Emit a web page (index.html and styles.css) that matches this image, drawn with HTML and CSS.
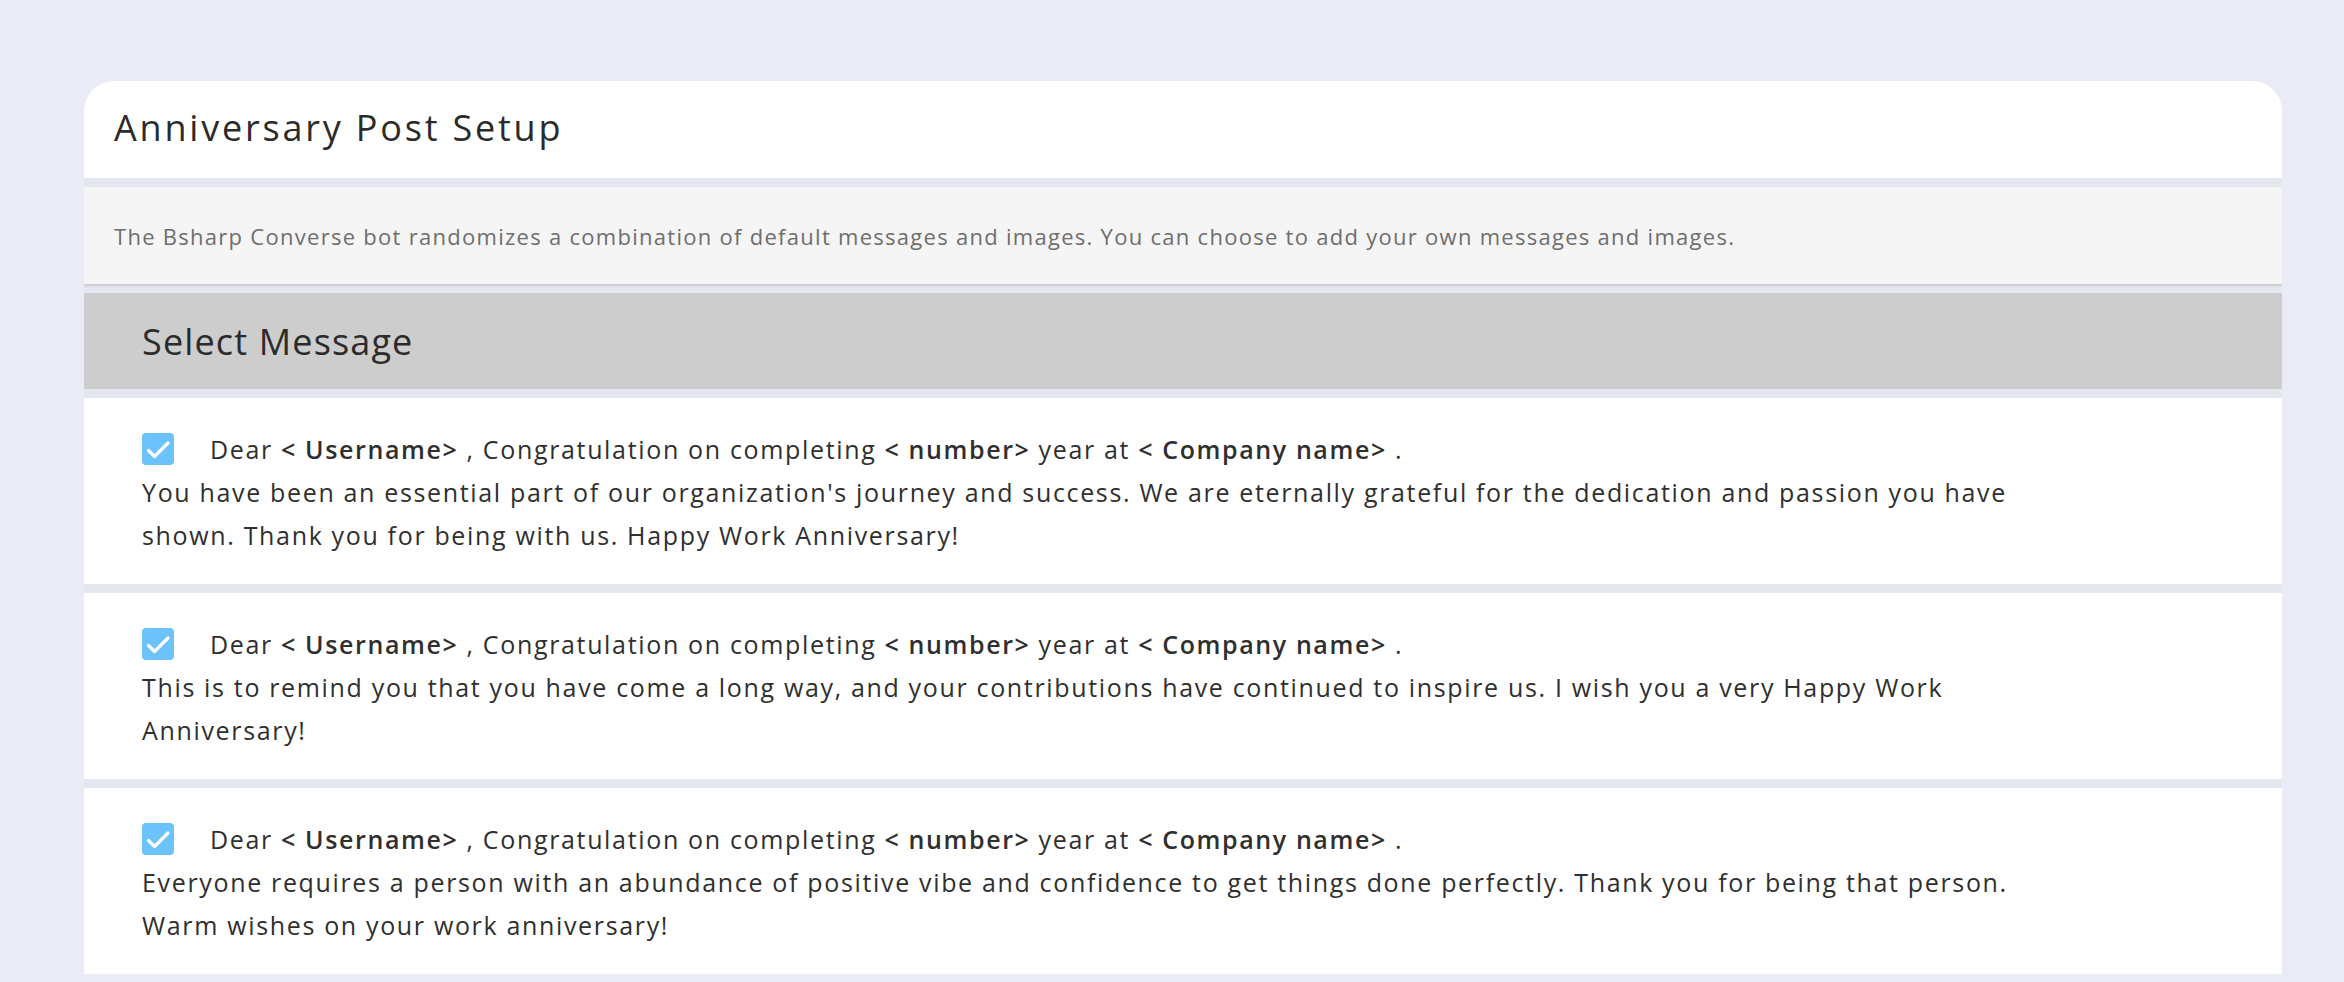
FILE: index.html
```html
<!DOCTYPE html>
<html lang="en">
<head>
<meta charset="utf-8">
<title>Anniversary Post Setup</title>
<link rel="stylesheet" href="styles.css">
</head>
<body>
<main class="page">
  <section class="card">
    <header class="card-header">
      <h1 class="title">Anniversary Post Setup</h1>
    </header>
    <div class="desc">
      <p>The Bsharp Converse bot randomizes a combination of default messages and images. You can choose to add your own messages and images.</p>
    </div>
    <div class="section-head">
      <h2>Select Message</h2>
    </div>
    <div class="message">
      <p><span class="check"><svg viewBox="0 0 32 32" width="32" height="32"><path d="M6.5 17.5 L12.5 23.5 L26 10" fill="none" stroke="#fff" stroke-width="3.2" stroke-linecap="round" stroke-linejoin="round"/></svg></span>Dear <b>&lt; Username&gt;</b> , Congratulation on completing <b>&lt; number&gt;</b> year at <b>&lt; Company name&gt;</b> .<br>You have been an essential part of our organization's journey and success. We are eternally grateful for the dedication and passion you have shown. Thank you for being with us. Happy Work Anniversary!</p>
    </div>
    <div class="message">
      <p><span class="check"><svg viewBox="0 0 32 32" width="32" height="32"><path d="M6.5 17.5 L12.5 23.5 L26 10" fill="none" stroke="#fff" stroke-width="3.2" stroke-linecap="round" stroke-linejoin="round"/></svg></span>Dear <b>&lt; Username&gt;</b> , Congratulation on completing <b>&lt; number&gt;</b> year at <b>&lt; Company name&gt;</b> .<br>This is to remind you that you have come a long way, and your contributions have continued to inspire us. I wish you a very Happy Work Anniversary!</p>
    </div>
    <div class="message">
      <p><span class="check"><svg viewBox="0 0 32 32" width="32" height="32"><path d="M6.5 17.5 L12.5 23.5 L26 10" fill="none" stroke="#fff" stroke-width="3.2" stroke-linecap="round" stroke-linejoin="round"/></svg></span>Dear <b>&lt; Username&gt;</b> , Congratulation on completing <b>&lt; number&gt;</b> year at <b>&lt; Company name&gt;</b> .<br>Everyone requires a person with an abundance of positive vibe and confidence to get things done perfectly. Thank you for being that person. Warm wishes on your work anniversary!</p>
    </div>
  </section>
</main>
</body>
</html>
```

FILE: styles.css
```css
html, body {
  margin: 0;
  padding: 0;
}
body {
  background: #e9ecf5;
  font-family: "Open Sans", "Liberation Sans", sans-serif;
  color: #2f2f2f;
  overflow: hidden;
}
.page {
  padding: 81px 62px 0 84px;
}
.card {
  background: #e5e7ee;
  border-radius: 30px 30px 0 0;
  overflow: hidden;
  display: flex;
  flex-direction: column;
  gap: 9px;
}
.card-header {
  background: #fff;
  height: 97px;
  display: flex;
  align-items: center;
  padding: 0 30px;
}
.title {
  margin: 0;
  font-size: 36px;
  font-weight: 400;
  color: #2b2b2b;
  letter-spacing: 2.8px;
  line-height: 1;
  padding-bottom: 4px;
}
.desc {
  background: #f5f5f5;
  height: 97px;
  display: flex;
  align-items: center;
  padding: 0 30px;
  box-shadow: 0 2px 2px rgba(0,0,0,0.12);
}
.desc p {
  margin: 0;
  font-size: 22px;
  color: #6e6e6e;
  letter-spacing: 1.28px;
}
.section-head {
  background: #cdcdcd;
  height: 96px;
  display: flex;
  align-items: center;
  padding: 0 58px;
}
.section-head h2 {
  margin: 0;
  font-size: 36px;
  font-weight: 400;
  color: #2b2b2b;
  letter-spacing: 1.15px;
}
.message {
  background: #fff;
  padding: 30px 58px 27px 58px;
}
.message p {
  margin: 0;
  max-width: 1910px;
  font-size: 25px;
  line-height: 43px;
  letter-spacing: 1.66px;
}
.message b {
  font-weight: 600;
  letter-spacing: 1.6px;
}
.check {
  display: inline-block;
  width: 32px;
  height: 32px;
  background: #6cc3fb;
  border-radius: 4px;
  vertical-align: -6px;
  margin-right: 36px;
}
.check svg {
  display: block;
}
```
